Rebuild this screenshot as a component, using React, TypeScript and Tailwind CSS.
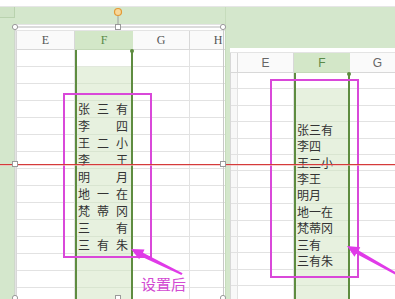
import React from "react";

const leftData: string[][] = [
  ["张", "三", "有"],
  ["李", "", "四"],
  ["王", "二", "小"],
  ["李", "", "王"],
  ["明", "", "月"],
  ["地", "一", "在"],
  ["梵", "蒂", "冈"],
  ["三", "", "有"],
  ["三", "有", "朱"],
];
const rightData = ["张三有", "李四", "王二小", "李王", "明月", "地一在", "梵蒂冈", "三有", "三有朱"];

const LROWS = Array.from({ length: 15 }, (_, i) => i);
const RROWS = Array.from({ length: 14 }, (_, i) => i);

const cjk = { fontFamily: '"Noto Sans CJK SC", "Noto Sans", sans-serif' };

function LeftPlainCol({ label, w }: { label: string; w: string }) {
  return (
    <div className={`${w} shrink-0 flex flex-col`}>
      <div
        className="h-[19px] shrink-0 border-b border-r border-[#d8d8d8] bg-[#fafafa] flex items-center justify-center text-[12px] text-[#555]"
        style={{ fontFamily: '"Liberation Serif", serif' }}
      >
        {label}
      </div>
      {LROWS.map((r) => (
        <div key={r} className="h-[17px] shrink-0 border-b border-r border-[#e2e2e2] bg-white" />
      ))}
    </div>
  );
}

function RightPlainCol({ label, w }: { label: string; w: string }) {
  return (
    <div className={`${w} shrink-0 flex flex-col`}>
      <div
        className="h-[20px] shrink-0 border-b border-r border-[#d8d8d8] bg-[#fafafa] flex items-center justify-center text-[12px] text-[#666]"
        style={{ fontFamily: '"Liberation Sans", sans-serif' }}
      >
        {label}
      </div>
      {RROWS.map((r) => (
        <div key={r} className="h-[16.4px] shrink-0 border-b border-r border-[#e2e2e2] bg-white" />
      ))}
    </div>
  );
}

export default function App() {
  return (
    <div className="relative w-[395px] h-[299px] overflow-hidden bg-white">
      <div className="h-[7px] bg-white border-b border-[#e6e6e6]" />
      <div className="flex h-[292px] bg-[#d4e7cc]">
        {/* left margin strip */}
        <div className="w-[15px] shrink-0 flex flex-col">
          <div className="h-[11px] border-b border-r border-[#b9d2ae] bg-[#cfe3c6]" />
        </div>

        {/* left picture */}
        <div className="w-[210px] shrink-0 flex flex-col overflow-hidden">
          <div className="h-[17px] shrink-0" />
          <div className="h-[7px] shrink-0 bg-white border-y border-[#e4e4e4]" />
          <div className="flex flex-1 overflow-hidden bg-white">
            <div className="w-[2px] shrink-0 border-r border-[#d8d8d8]" />
            <LeftPlainCol label="E" w="w-[58px]" />
            {/* F column */}
            <div className="w-[58px] shrink-0 flex flex-col">
              <div
                className="h-[19px] shrink-0 border-b border-[#c4d9b8] bg-[#d3e7c8] flex items-center justify-center text-[12px] text-[#5a8a48]"
                style={{ fontFamily: '"Liberation Serif", serif' }}
              >
                F
              </div>
              <div className="relative flex-1 border-x-2 border-[#5e8c40] bg-[#e7f1df]">
                <div className="absolute -top-[1px] -right-[3px] w-[4px] h-[4px] rounded-full bg-[#5e8c40]" />
                {LROWS.map((r) => {
                  const d = r >= 3 && r < 12 ? leftData[r - 3] : null;
                  return (
                    <div
                      key={r}
                      className={
                        r === 0
                          ? "h-[17px] border-b border-[#e2e8dd] bg-white"
                          : "h-[17px] border-b border-[#d9e5d1] flex items-center gap-[7px] pl-[1px] text-[12px] leading-none text-[#333]"
                      }
                      style={cjk}
                    >
                      {d &&
                        d.map((c, i) => (
                          <span key={i} className="w-[12px] text-center">
                            {c}
                          </span>
                        ))}
                    </div>
                  );
                })}
              </div>
            </div>
            <LeftPlainCol label="G" w="w-[57px]" />
            <LeftPlainCol label="H" w="w-[57px]" />
          </div>
        </div>

        {/* gap */}
        <div className="w-[5px] shrink-0 border-l border-[#c6dcbc]" />

        {/* right picture */}
        <div className="flex-1 flex flex-col overflow-hidden">
          <div className="h-[41px] shrink-0" />
          <div className="h-[5px] shrink-0 bg-white border-b border-[#e4e4e4]" />
          <div className="flex flex-1 overflow-hidden bg-white">
            <div className="w-[8px] shrink-0 flex flex-col border-l border-[#d8d8d8]">
              <div className="h-[20px] shrink-0 border-b border-r border-[#d8d8d8] bg-[#fafafa]" />
              {RROWS.map((r) => (
                <div key={r} className="h-[16.4px] shrink-0 border-b border-r border-[#e2e2e2] bg-[#f8f8f8]" />
              ))}
            </div>
            <RightPlainCol label="E" w="w-[56px]" />
            <div className="w-[56px] shrink-0 flex flex-col">
              <div
                className="h-[20px] shrink-0 border-b border-[#c4d9b8] bg-[#d3e7c8] flex items-center justify-center text-[12px] text-[#5a8a48]"
                style={{ fontFamily: '"Liberation Sans", sans-serif' }}
              >
                F
              </div>
              <div className="relative flex-1 border-x-2 border-[#5e8c40] bg-[#e7f1df]">
                <div className="absolute -top-[1px] -right-[3px] w-[4px] h-[4px] rounded-full bg-[#5e8c40]" />
                {RROWS.map((r) => {
                  const t = r >= 3 && r < 12 ? rightData[r - 3] : "";
                  return (
                    <div
                      key={r}
                      className={
                        r === 0
                          ? "h-[16.4px] border-b border-[#e2e8dd] bg-white"
                          : "h-[16.4px] border-b border-[#d9e5d1] flex items-center pl-[1px] text-[12px] leading-none text-[#333]"
                      }
                      style={cjk}
                    >
                      {t}
                    </div>
                  );
                })}
              </div>
            </div>
            <RightPlainCol label="G" w="w-[56px]" />
          </div>
        </div>
      </div>

      {/* magenta boxes */}
      <div className="absolute left-[63px] top-[93px] w-[89px] h-[165px] border-2 border-[#d948d9]" />
      <div className="absolute left-[270px] top-[79px] w-[89px] h-[199px] border-2 border-[#d948d9]" />

      {/* red line */}
      <div className="absolute left-0 right-0 top-[164px] h-[1px] bg-[#d53a3a]" />
      <div className="absolute left-0 right-0 top-[165px] h-[1px] bg-[#f0b0b0] opacity-60" />

      {/* label */}
      <div
        className="absolute left-[141px] top-[276px] text-[15px] leading-none text-[#d24ad2]"
        style={cjk}
      >
        设置后
      </div>

      {/* drawings: selection frame, handles, arrows */}
      <svg className="absolute inset-0 pointer-events-none" width="395" height="299" viewBox="0 0 395 299">
        <line x1="15" y1="27" x2="223" y2="27" stroke="#b8b8b8" strokeWidth="1" />
        <line x1="15" y1="27" x2="15" y2="299" stroke="#c8c8c8" strokeWidth="1" />
        <line x1="223.5" y1="27" x2="223.5" y2="299" stroke="#c8c8c8" strokeWidth="1" />
        <line x1="118" y1="15.5" x2="118" y2="24" stroke="#a0a0a0" strokeWidth="1" />
        <circle cx="118" cy="12" r="3.5" fill="#f7d79a" stroke="#e39a36" strokeWidth="1.2" />
        <circle cx="15" cy="27" r="2.6" fill="#fff" stroke="#9a9a9a" strokeWidth="1" />
        <rect x="115.5" y="24.5" width="5" height="5" fill="#fff" stroke="#9a9a9a" strokeWidth="1" />
        <circle cx="223" cy="27" r="2.6" fill="#fff" stroke="#9a9a9a" strokeWidth="1" />
        <rect x="12.5" y="161.5" width="5" height="5" fill="#fff" stroke="#9a9a9a" strokeWidth="1" />
        <rect x="220.5" y="161.5" width="5" height="5" fill="#fff" stroke="#9a9a9a" strokeWidth="1" />
        <circle cx="15" cy="298" r="2.6" fill="#fff" stroke="#9a9a9a" strokeWidth="1" />
        <rect x="115.5" y="295.5" width="5" height="5" fill="#fff" stroke="#9a9a9a" strokeWidth="1" />
        <circle cx="223" cy="298" r="2.6" fill="#fff" stroke="#9a9a9a" strokeWidth="1" />
        <polygon
          points="131,249 144.5,249.5 143,252.8 182.6,273.2 181.4,275 140.6,256.3 139.2,259.3"
          fill="#e03ae8"
        />
        <polygon
          points="347,246 360.3,247.3 358.6,250.4 400.5,275.1 399.5,276.9 356.2,253.8 354.5,256.8"
          fill="#e03ae8"
        />
      </svg>
    </div>
  );
}
